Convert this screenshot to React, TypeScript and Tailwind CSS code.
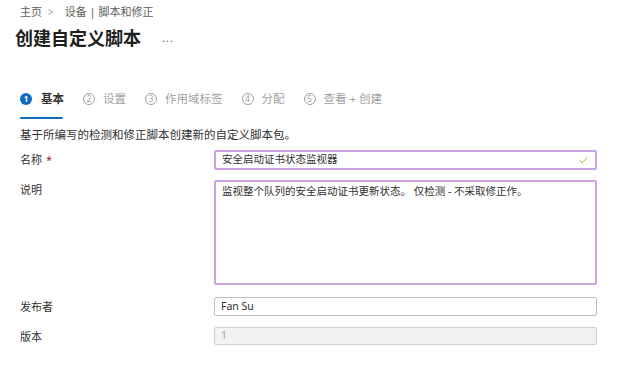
import { Check } from 'lucide-react';

const steps = [
    { n: 1, label: '基本', active: true },
    { n: 2, label: '设置' },
    { n: 3, label: '作用域标签' },
    { n: 4, label: '分配' },
    { n: 5, label: '查看 + 创建' },
];

function Field({ label, required, children }: { label: string; required?: boolean; children: React.ReactNode }) {
    return (
        <div className="flex items-start">
            <div className="w-[194px] shrink-0 pt-[2px] text-[11px] leading-4 text-[#323130]">
                {label}
                {required && <span className="ml-1 text-[#a4262c]">*</span>}
            </div>
            <div className="w-[383px]">{children}</div>
        </div>
    );
}

export default function App() {
    return (
        <main
            className="h-[366px] w-[630px] overflow-hidden bg-white text-[#323130]"
            style={{ fontFamily: '"Segoe UI", "Noto Sans", "Noto Sans CJK SC", sans-serif' }}
        >
            <div className="pl-5 pt-[4px]">
                {/* breadcrumb */}
                <div className="flex h-4 items-center text-[11px] text-[#605e5c]">
                    <span>主页</span>
                    <span className="ml-[6px] mr-[11px] text-[10px] text-[#a19f9d]">&gt;</span>
                    <span>设备 | 脚本和修正</span>
                </div>
                <div className="-ml-[5px] mt-[5px] flex h-[26px] items-center">
                    <h1 className="text-[18px] font-bold leading-[26px] text-[#201f1e]">创建自定义脚本</h1>
                    <span className="ml-[21px] text-[11px] tracking-[1px] text-[#605e5c]">...</span>
                </div>

                {/* steps */}
                <div className="mt-[38px] flex items-center text-[11.5px] leading-5">
                    {steps.map((s) => (
                        <div key={s.n} className="mr-[19px] flex items-center">
                            {s.active ? (
                                <span className="flex h-3 w-3 items-center justify-center rounded-full bg-[#0f6cbd] text-[8px] font-bold leading-none text-white">
                                    {s.n}
                                </span>
                            ) : (
                                <span className="flex h-3 w-3 items-center justify-center rounded-full border border-[#a19f9d] text-[8px] leading-none text-[#a19f9d]">
                                    {s.n}
                                </span>
                            )}
                            <span
                                className={
                                    s.active
                                        ? 'ml-[9px] font-bold text-[#323130]'
                                        : 'ml-[8px] text-[#a19f9d]'
                                }
                            >
                                {s.label}
                            </span>
                        </div>
                    ))}
                </div>
                <div className="mt-[8px] h-[2px] w-[43px] rounded bg-[#0f6cbd]" />

                <p className="mt-[8px] text-[11.5px] leading-4 text-[#323130]">
                    基于所编写的检测和修正脚本创建新的自定义脚本包。
                </p>

                <div className="mt-[7px] flex flex-col">
                    <Field label="名称" required>
                        <div className="flex h-[20px] items-center justify-between rounded-[2px] border-2 border-[#c9a3e0] px-[6px] text-[10.5px]">
                            <span>安全启动证书状态监视器</span>
                            <Check className="h-[11px] w-[11px] text-[#7fba00]" strokeWidth={2} />
                        </div>
                    </Field>
                    <div className="h-[10px]" />
                    <Field label="说明">
                        <div className="h-[105px] rounded-[2px] border-2 border-[#c9a3e0] px-[6px] pt-[1px] text-[10.5px] leading-4">
                            监视整个队列的安全启动证书更新状态。 仅检测 - 不采取修正作。
                        </div>
                    </Field>
                    <div className="h-[12px]" />
                    <Field label="发布者">
                        <div className="flex h-[19px] items-center rounded-[2px] border border-[#bfbdbb] px-[6px] text-[10.5px]">
                            Fan Su
                        </div>
                    </Field>
                    <div className="h-[11px]" />
                    <Field label="版本">
                        <div className="flex h-[18px] items-center rounded-[2px] border border-[#d2d0ce] bg-[#f3f2f1] px-[6px] text-[10.5px] text-[#a19f9d]">
                            1
                        </div>
                    </Field>
                </div>
            </div>
        </main>
    );
}
